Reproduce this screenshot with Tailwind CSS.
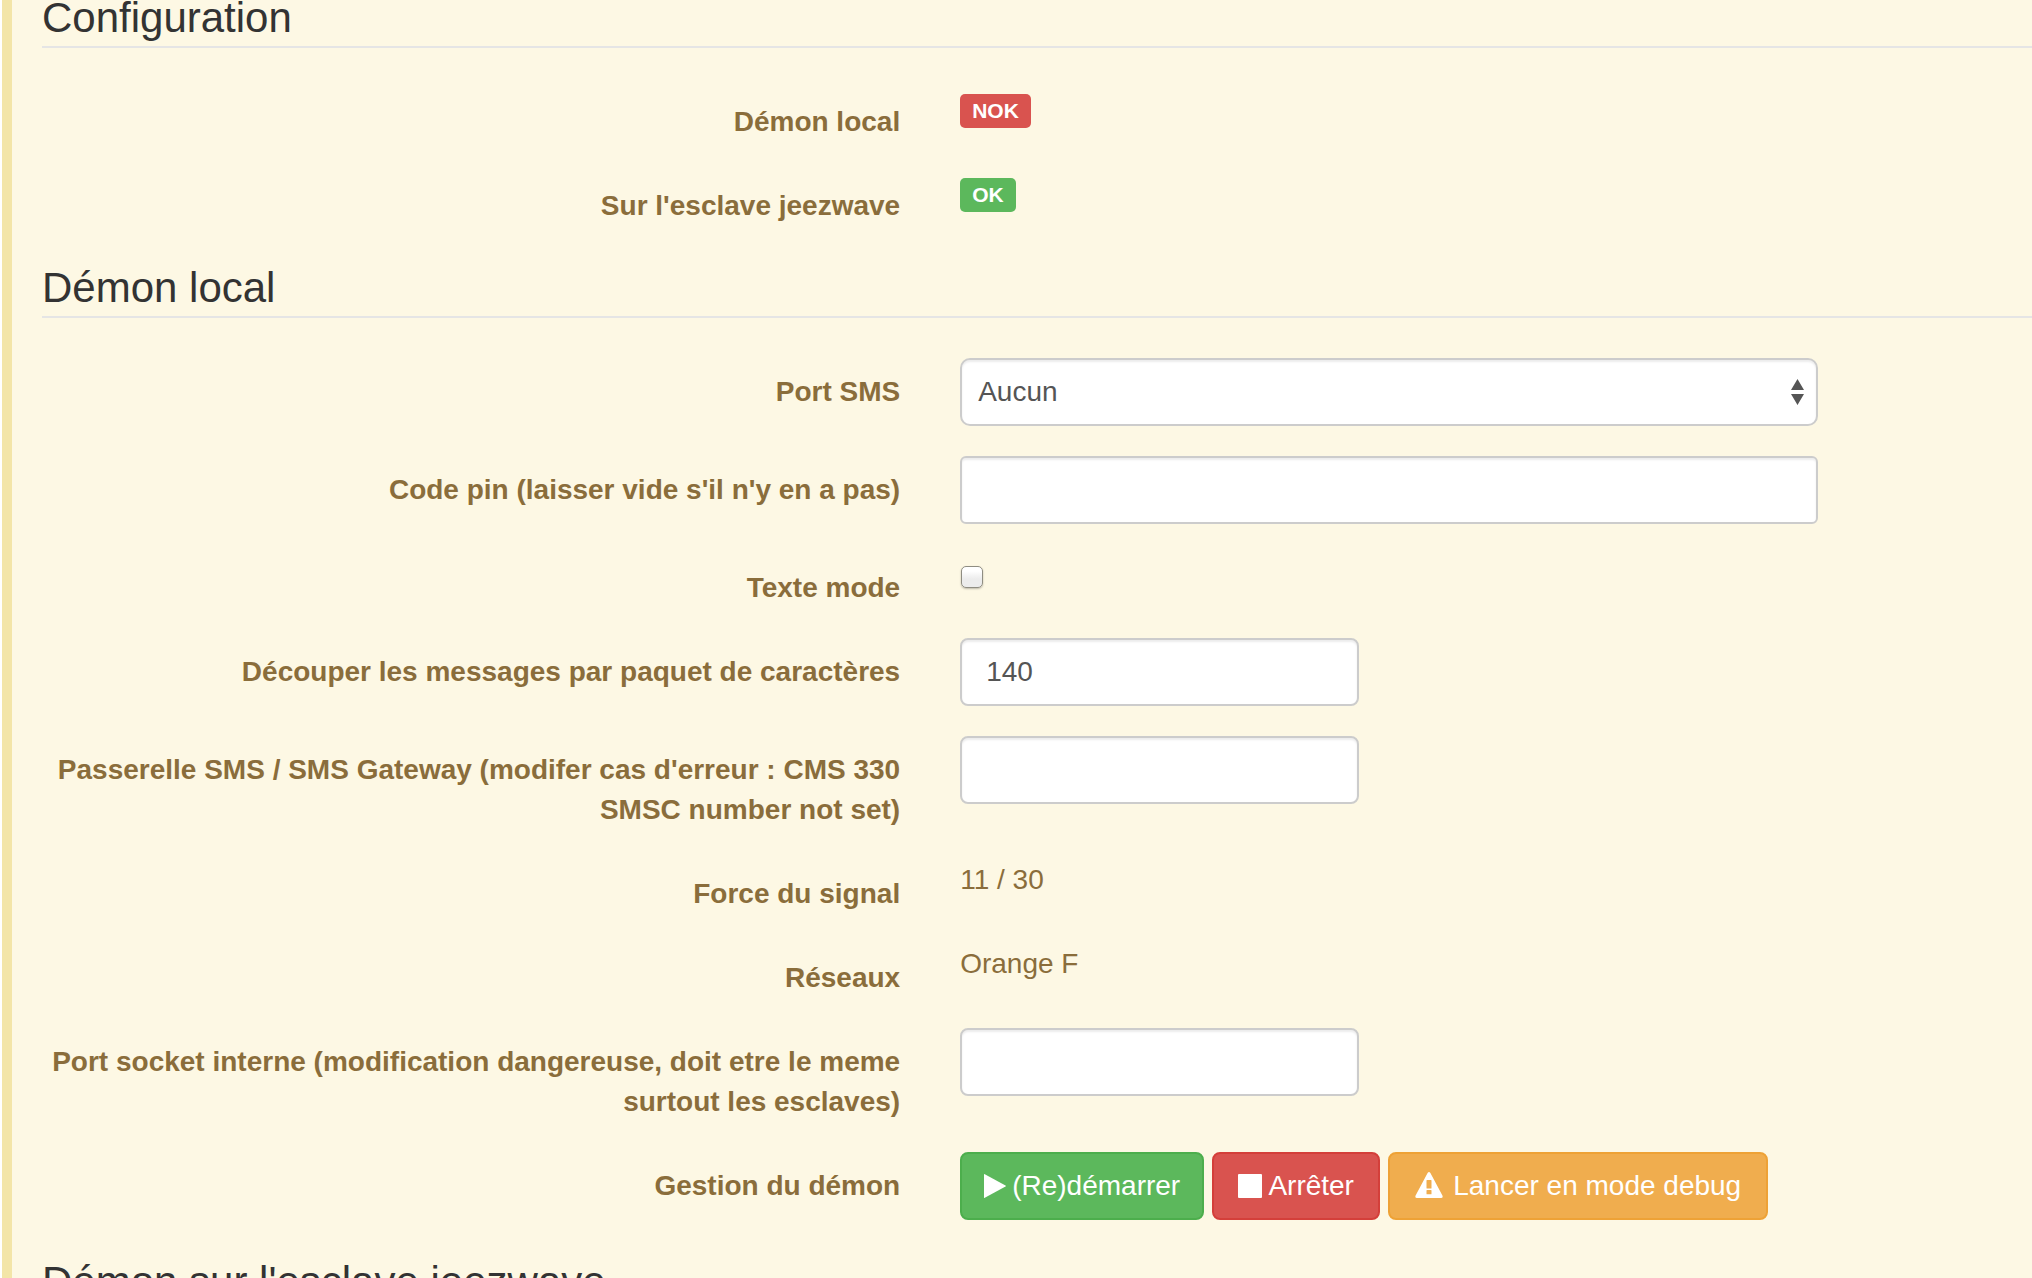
<!DOCTYPE html>
<html lang="fr">
<head>
<meta charset="utf-8">
<meta name="viewport" content="width=device-width, initial-scale=1">
<title>Configuration</title>
<script src="https://cdn.jsdelivr.net/npm/@tailwindcss/browser@4"></script>
</head>
<body class="h-screen overflow-hidden bg-white pl-[2px] font-['Helvetica_Neue',Helvetica,'Liberation_Sans',Arial,sans-serif] text-[28px] leading-10 text-[#8a6d3b]">
<main class="min-h-screen border-l-10 border-[#f3e5a8] bg-[#fdf8e4]">
<form class="-mt-[14px] flex flex-col gap-10" onsubmit="return false">

  <section>
    <h2 class="mb-10 ml-[30px] border-b-2 border-[#e5e5e5] pt-1 text-[42px] leading-[56px] text-[#333]">Configuration</h2>
    <div class="flex flex-col gap-[30px]">
      <div class="grid grid-cols-[repeat(22,minmax(0,1fr))]">
        <label for="etat-local" class="col-span-10 px-[30px] pt-[14px] text-right font-bold">Démon local</label>
        <div class="col-span-10 flex items-start px-[30px] pt-[6px]">
          <output id="etat-local" class="rounded-[5px] bg-[#d9534f] px-3 py-[5px] text-[21px] leading-6 font-bold text-white">NOK</output>
        </div>
      </div>
      <div class="grid grid-cols-[repeat(22,minmax(0,1fr))]">
        <label for="etat-esclave" class="col-span-10 px-[30px] pt-[14px] text-right font-bold">Sur l'esclave jeezwave</label>
        <div class="col-span-10 flex items-start px-[30px] pt-[6px]">
          <output id="etat-esclave" class="rounded-[5px] bg-[#5cb85c] px-3 py-[5px] text-[21px] leading-6 font-bold text-white">OK</output>
        </div>
      </div>
    </div>
  </section>

  <section class="-mt-[10px]">
    <h2 class="mb-10 ml-[30px] border-b-2 border-[#e5e5e5] pt-1 text-[42px] leading-[56px] text-[#333]">Démon local</h2>
    <div class="flex flex-col gap-[30px]">
      <div class="grid grid-cols-[repeat(22,minmax(0,1fr))]">
        <label for="port" class="col-span-10 px-[30px] pt-[14px] text-right font-bold">Port SMS</label>
        <div class="col-span-10 px-[30px]">
          <div class="relative">
            <select id="port" class="block h-[68px] w-full appearance-none rounded-[10px] border-2 border-[#ccc] bg-white px-4 text-[#555] shadow-[inset_0_2px_2px_rgba(0,0,0,0.075)]">
              <option>Aucun</option>
            </select>
            <svg class="pointer-events-none absolute top-[21px] right-[14px] h-[26px] w-[13px]" viewBox="0 0 13 26" fill="#555" aria-hidden="true"><path d="M6.500 0L13 11H0zM0 15h13L6.500 26z"/></svg>
          </div>
        </div>
      </div>
      <div class="grid grid-cols-[repeat(22,minmax(0,1fr))]">
        <label for="pin" class="col-span-10 px-[30px] pt-[14px] text-right font-bold">Code pin (laisser vide s'il n'y en a pas)</label>
        <div class="col-span-10 px-[30px]">
          <input id="pin" type="text" class="block h-[68px] w-full rounded-[6px] border-2 border-[#ccc] bg-white px-6 text-[#555] shadow-[inset_0_2px_2px_rgba(0,0,0,0.075)]">
        </div>
      </div>
      <div class="grid grid-cols-[repeat(22,minmax(0,1fr))]">
        <label for="texte" class="col-span-10 px-[30px] pt-[14px] text-right font-bold">Texte mode</label>
        <div class="col-span-10 px-[30px] pt-3">
          <input id="texte" type="checkbox" class="ml-px block size-[22px] appearance-none rounded-[5px] border border-[#8f8d82] bg-linear-to-b from-white from-20% to-[#ececec] to-60% shadow-[0_1px_2px_rgba(0,0,0,0.25)]">
        </div>
      </div>
      <div class="grid grid-cols-[repeat(22,minmax(0,1fr))]">
        <label for="paquet" class="col-span-10 px-[30px] pt-[14px] text-right font-bold">Découper les messages par paquet de caractères</label>
        <div class="col-span-5 px-[30px]">
          <input id="paquet" type="text" value="140" class="block h-[68px] w-full rounded-[8px] border-2 border-[#ccc] bg-white px-6 text-[#555] shadow-[inset_0_2px_2px_rgba(0,0,0,0.075)]">
        </div>
      </div>
      <div class="grid grid-cols-[repeat(22,minmax(0,1fr))]">
        <label for="passerelle" class="col-span-10 px-[30px] pt-[14px] text-right font-bold">Passerelle SMS / SMS Gateway (modifer cas d'erreur : CMS 330 SMSC number not set)</label>
        <div class="col-span-5 px-[30px]">
          <input id="passerelle" type="text" class="block h-[68px] w-full rounded-[8px] border-2 border-[#ccc] bg-white px-6 text-[#555] shadow-[inset_0_2px_2px_rgba(0,0,0,0.075)]">
        </div>
      </div>
      <div class="grid grid-cols-[repeat(22,minmax(0,1fr))]">
        <label for="signal" class="col-span-10 px-[30px] pt-[14px] text-right font-bold">Force du signal</label>
        <div class="col-span-10 px-[30px]"><output id="signal">11 / 30</output></div>
      </div>
      <div class="grid grid-cols-[repeat(22,minmax(0,1fr))]">
        <label for="reseaux" class="col-span-10 px-[30px] pt-[14px] text-right font-bold">Réseaux</label>
        <div class="col-span-10 px-[30px]"><output id="reseaux">Orange F</output></div>
      </div>
      <div class="grid grid-cols-[repeat(22,minmax(0,1fr))]">
        <label for="socket" class="col-span-10 px-[30px] pt-[14px] text-right font-bold">Port socket interne (modification dangereuse, doit etre le meme surtout les esclaves)</label>
        <div class="col-span-5 px-[30px]">
          <input id="socket" type="text" class="block h-[68px] w-full rounded-[8px] border-2 border-[#ccc] bg-white px-6 text-[#555] shadow-[inset_0_2px_2px_rgba(0,0,0,0.075)]">
        </div>
      </div>
      <div class="grid grid-cols-[repeat(22,minmax(0,1fr))]">
        <span id="gestion" class="col-span-10 px-[30px] pt-[14px] text-right font-bold">Gestion du démon</span>
        <div class="col-span-12 flex gap-2 px-[30px] whitespace-nowrap" role="group" aria-labelledby="gestion">
          <button type="button" class="flex h-[68px] w-[244px] items-center justify-center gap-[6px] rounded-[8px] border-2 border-[#4cae4c] bg-[#5cb85c] text-white">
            <svg class="h-6 w-[22px]" viewBox="0 0 22 24" fill="currentColor" aria-hidden="true"><path d="M0 0.600Q0 -0.200 0.800 0.200L21.500 11.500Q22.300 12 21.500 12.500L0.800 23.800Q0 24.200 0 23.400z"/></svg>
            (Re)démarrer
          </button>
          <button type="button" class="flex h-[68px] w-[168px] items-center justify-center gap-[6px] rounded-[8px] border-2 border-[#d43f3a] bg-[#d9534f] text-white">
            <svg class="size-6" viewBox="0 0 24 24" fill="currentColor" aria-hidden="true"><rect width="24" height="24" rx="1"/></svg>
            Arrêter
          </button>
          <button type="button" class="flex h-[68px] w-[380px] items-center justify-center gap-[10px] rounded-[8px] border-2 border-[#eea236] bg-[#f0ad4e] text-white">
            <svg class="mb-[2px] h-[26px] w-7" viewBox="0 0 28 26" fill="currentColor" fill-rule="evenodd" aria-hidden="true"><path d="M12.600 0.900Q14 -0.900 15.400 0.900L27.400 23.600Q28.300 25.900 26 26H2Q-0.300 25.900 0.600 23.600zM11.500 8.500q0-.5.500-.5h4q.5 0 .5.500v7.500q0 .5-.5.500h-4q-.5 0-.5-.5zM11.500 18.600q0-.5.500-.5h4q.5 0 .5.500v3.100q0 .5-.5.500h-4q-.5 0-.5-.5z"/></svg>
            Lancer en mode debug
          </button>
        </div>
      </div>
    </div>
  </section>

  <section class="-mt-[10px]">
    <h2 class="mb-10 ml-[30px] border-b-2 border-[#e5e5e5] pt-1 text-[42px] leading-[56px] text-[#333]">Démon sur l'esclave jeezwave</h2>
  </section>

</form>
</main>
</body>
</html>
